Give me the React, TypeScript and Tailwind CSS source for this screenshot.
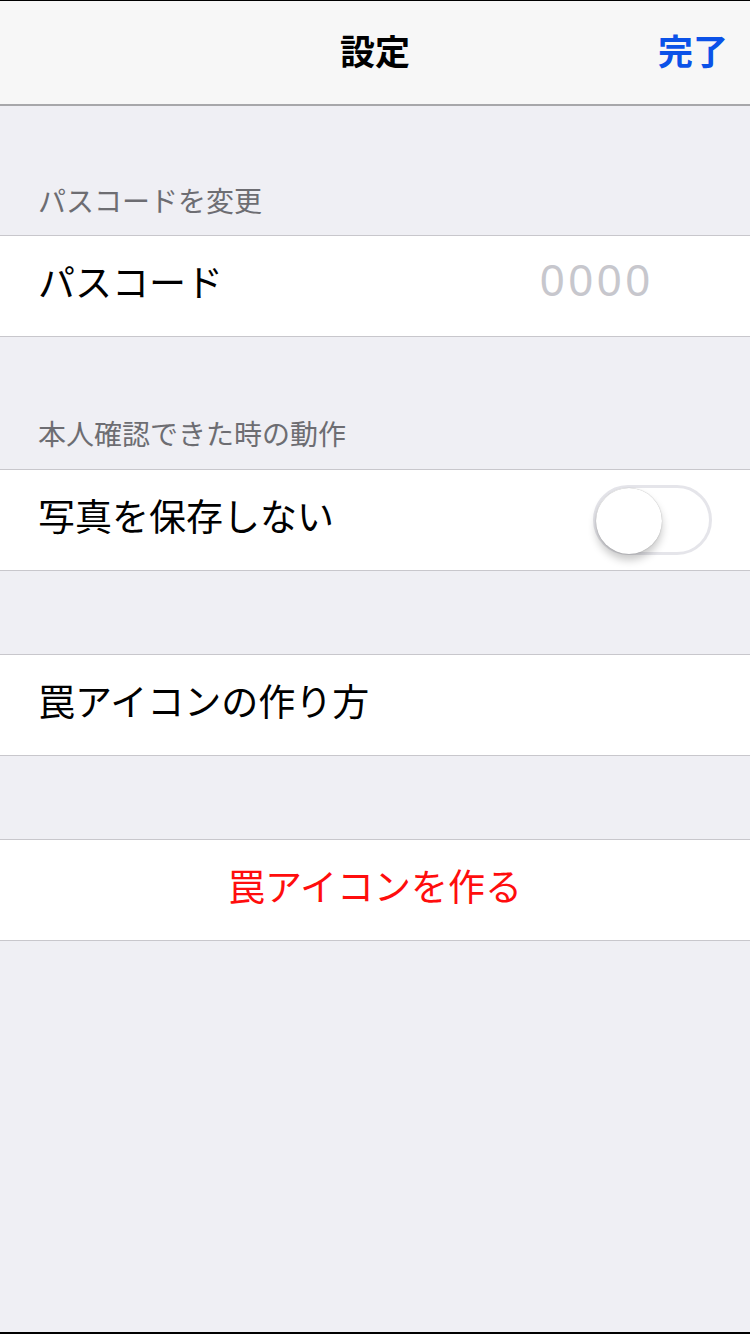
import { useState } from "react";

const font = { fontFamily: '"Noto Sans CJK JP", "Noto Sans", sans-serif' };

function SectionHeader({ title, height, pb }: { title?: string; height: string; pb: string }) {
  return (
    <div className={`${height} ${pb} flex items-end px-[38px]`}>
      {title && <span className="text-[28px] leading-[34px] text-[#6d6d72]">{title}</span>}
    </div>
  );
}

function Row({ children, center }: { children: React.ReactNode; center?: boolean }) {
  return (
    <div
      className={`h-[102px] bg-white border-y border-[#c8c7cc] flex items-center px-[38px] ${
        center ? "justify-center" : "justify-between"
      }`}
    >
      {children}
    </div>
  );
}

function Toggle() {
  const [on, setOn] = useState(false);
  return (
    <button
      onClick={() => setOn(!on)}
      className={`relative w-[119px] h-[70px] rounded-full border-[3px] ${
        on ? "bg-[#4cd964] border-[#4cd964]" : "bg-white border-[#e5e5ea]"
      }`}
    >
      <span
        className={`absolute top-[0px] ${
          on ? "left-[47px]" : "left-[0px]"
        } w-[66px] h-[66px] rounded-full bg-white shadow-[0_6px_8px_rgba(0,0,0,0.22),0_0_1px_rgba(0,0,0,0.35)]`}
      />
    </button>
  );
}

export default function App() {
  return (
    <div className="h-[1334px] flex flex-col bg-[#efeff4]" style={font}>
      <div className="h-[106px] shrink-0 bg-[#f7f7f7] border-t border-black border-b-2 border-b-[#a7a7aa] relative flex items-center justify-center">
        <span className="text-[35px] font-bold text-black mb-[4px]">設定</span>
        <button className="absolute right-[22px] text-[35px] font-bold text-[#0b52e8] mb-[4px]">完了</button>
      </div>

      <SectionHeader title="パスコードを変更" height="h-[129px]" pb="pb-[18px]" />
      <Row>
        <span className="text-[37px] text-black mb-[8px]">パスコード</span>
        <span
          className="mr-[58px] mb-[10px] text-[44px] tracking-[4px] text-[#c7c7cd]"
          style={{ fontFamily: '"Liberation Sans", sans-serif' }}
        >
          0000
        </span>
      </Row>

      <SectionHeader title="本人確認できた時の動作" height="h-[132px]" pb="pb-[19px]" />
      <Row>
        <span className="text-[37px] text-black mb-[8px]">写真を保存しない</span>
        <Toggle />
      </Row>

      <SectionHeader height="h-[83px]" pb="pb-0" />
      <Row>
        <span className="text-[37px] text-black mb-[8px]">罠アイコンの作り方</span>
      </Row>

      <SectionHeader height="h-[83px]" pb="pb-0" />
      <Row center>
        <span className="text-[37px] text-[#ff0d0d] mb-[8px]">罠アイコンを作る</span>
      </Row>

      <div className="flex-1" />
      <div className="h-[2px] bg-black shrink-0" />
    </div>
  );
}
